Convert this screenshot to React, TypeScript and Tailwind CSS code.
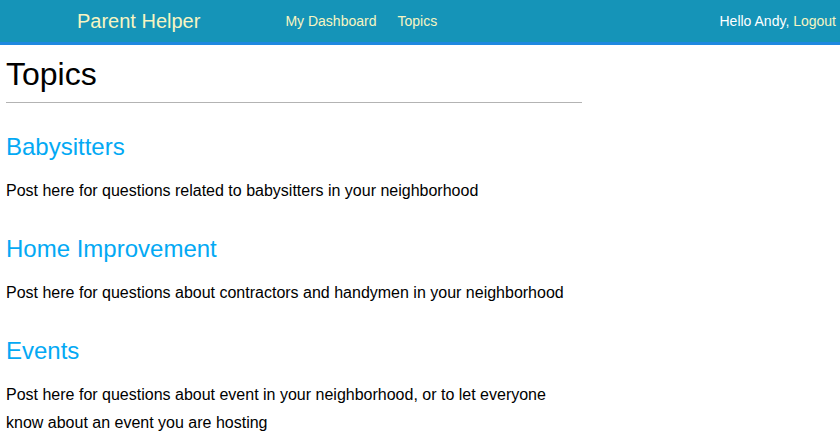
const topics = [
  {
    title: "Babysitters",
    body: "Post here for questions related to babysitters in your neighborhood",
  },
  {
    title: "Home Improvement",
    body: "Post here for questions about contractors and handymen in your neighborhood",
  },
  {
    title: "Events",
    body: "Post here for questions about event in your neighborhood, or to let everyone know about an event you are hosting",
  },
];

export default function App() {
  return (
    <div className="min-h-screen bg-white font-['Liberation_Sans',Arial,sans-serif] text-black">
      {/* Navbar */}
      <header className="h-[45px] bg-[#1594b8] border-b-[3px] border-[#1e88e0] flex items-center">
        <a className="ml-[77px] text-[20px] text-[#f7f5c2] leading-none">Parent Helper</a>
        <nav className="ml-[85px] flex gap-[21px] text-[14px] text-[#f7f5c2]">
          <a>My Dashboard</a>
          <a>Topics</a>
        </nav>
        <div className="ml-auto mr-[4px] text-[14px] text-white">
          Hello Andy, <a className="text-[#f7f5c2]">Logout</a>
        </div>
      </header>

      {/* Content */}
      <main className="w-[588px] px-[6px]">
        <h1 className="mt-[10px] text-[32px] leading-[38px]">Topics</h1>
        <hr className="mt-[9px] border-t border-[#b3b3b3]" />
        {topics.map((t) => (
          <section key={t.title} className="mt-[29px]">
            <h2 className="text-[24px] leading-[29px] text-[#03a9f4]">{t.title}</h2>
            <p className="mt-[16px] text-[16px] leading-[28px]">{t.body}</p>
          </section>
        ))}
      </main>
    </div>
  );
}
